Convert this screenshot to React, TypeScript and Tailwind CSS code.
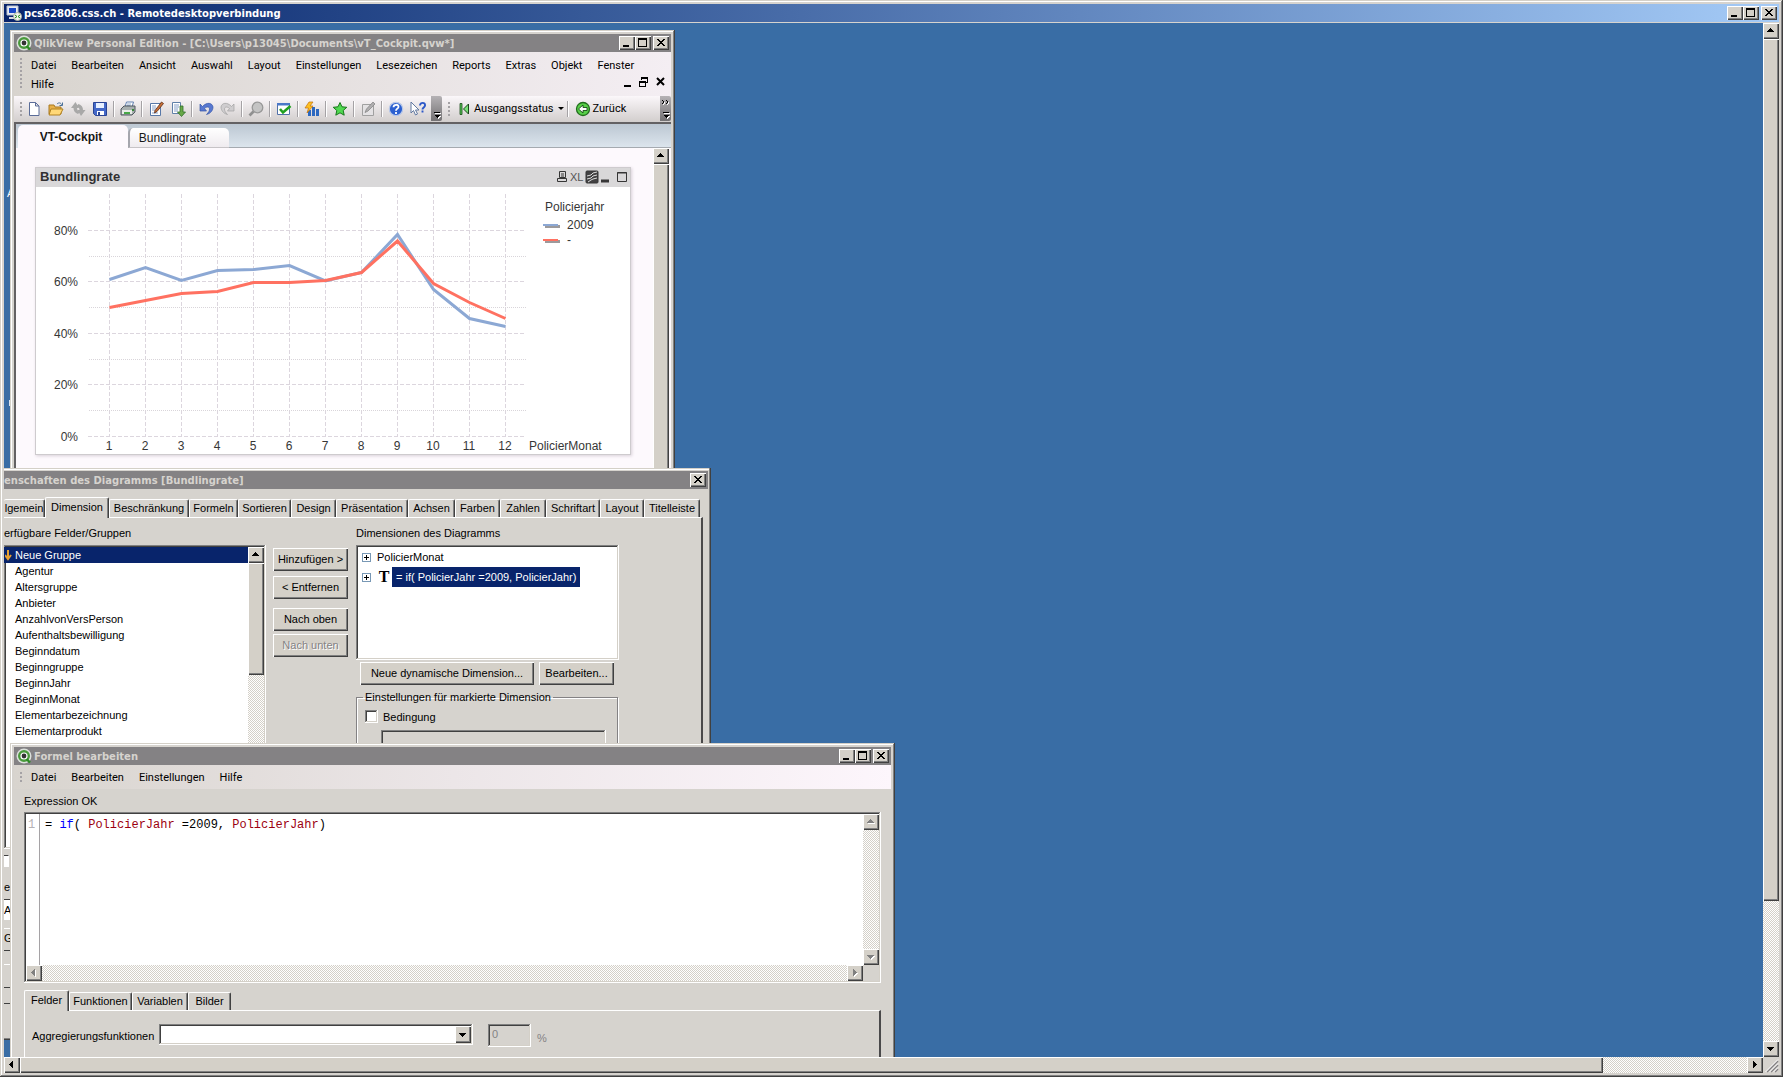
import type { ReactNode } from 'react'

const RAISED = 'bg-[#d4d0c8] shadow-[inset_1px_1px_0_#fff,inset_-1px_-1px_0_#404040,inset_-2px_-2px_0_#808080]'
const FRAME =
  'bg-[#d6d3ce] shadow-[inset_-1px_-1px_0_#404040,inset_1px_1px_0_#d4d0c8,inset_-2px_-2px_0_#808080,inset_2px_2px_0_#fff]'
const SUNKEN =
  'p-[2px] shadow-[inset_-1px_-1px_0_#fff,inset_1px_1px_0_#808080,inset_-2px_-2px_0_#d4d0c8,inset_2px_2px_0_#404040]'
const TRACK = '[background:repeating-conic-gradient(#d4d0c8_0_25%,#fff_0_50%)_0_0/2px_2px]'
const MENU_FONT = "font-['Roboto','Liberation_Sans',sans-serif] text-[11px] leading-4"
const CAPTION_FONT = "pt-px font-['DejaVu_Sans','Noto_Sans',sans-serif] text-[10px] font-bold leading-4"

/* ---------- window chrome ---------- */

function CaptionIcon({ kind }: { kind: 'min' | 'max' | 'close' }) {
  return (
    <svg width="16" height="14" viewBox="0 0 16 14" shapeRendering="crispEdges">
      {kind === 'min' && <rect x="4" y="9" width="6" height="2" fill="#000" />}
      {kind === 'max' && (
        <path d="M3 2h9v9H3zM4 4v6h7V4z" fill="#000" fillRule="evenodd" />
      )}
      {kind === 'close' && (
        <path d="M4 3h2v1h1v1h2V4h1V3h2v1h-1v1h-1v1H9v1h1v1h1v1h1v1h-2V9H9V8H7v1H6v1H4V9h1V8h1V7h1V6H6V5H5V4H4z" fill="#000" />
      )}
    </svg>
  )
}

function CaptionButtons({ only }: { only?: 'close' }) {
  return (
    <div className="ml-auto flex shrink-0 pr-[2px]">
      {!only && (
        <>
          <button aria-label="Minimieren" className={`h-[14px] w-4 ${RAISED}`}>
            <CaptionIcon kind="min" />
          </button>
          <button aria-label="Maximieren" className={`mr-[2px] h-[14px] w-4 ${RAISED}`}>
            <CaptionIcon kind="max" />
          </button>
        </>
      )}
      <button aria-label="Schliessen" className={`h-[14px] w-4 ${RAISED}`}>
        <CaptionIcon kind="close" />
      </button>
    </div>
  )
}

function QlikIcon() {
  return (
    <svg width="16" height="16" viewBox="0 0 16 16" className="ml-[2px] shrink-0">
      <circle cx="8" cy="8" r="7.5" fill="#dce0dc" />
      <circle cx="8" cy="8" r="4.800" fill="#fff" stroke="#4a9a3c" strokeWidth="2.400" />
      <circle cx="8" cy="8" r="2.400" fill="#333" />
      <path d="M10.500 11l3.500 3.500" stroke="#2c8a24" strokeWidth="2.400" />
    </svg>
  )
}

function InactiveTitle({ title, icon, only }: { title: string; icon?: boolean; only?: 'close' }) {
  return (
    <div className="flex h-[18px] shrink-0 items-center bg-[#848284]">
      {icon && <QlikIcon />}
      <h2 className={`whitespace-nowrap text-[#d6d3ce] ${icon ? 'pl-[2px]' : ''} ${CAPTION_FONT}`}>{title}</h2>
      <CaptionButtons only={only} />
    </div>
  )
}

/* ---------- scroll bars ---------- */

const ARROWS = {
  up: 'M4 9h7v-1h-1v-1H9V6H8V5H7v1H6v1H5v1H4z',
  down: 'M4 6h7v1h-1v1H9v1H8v1H7V9H6V8H5V7H4z',
  left: 'M9 4v7H8v-1H7V9H6V8H5V7h1V6h1V5h1V4z',
  right: 'M6 4v7h1v-1h1V9h1V8h1V7H9V6H8V5H7V4z',
}

function ArrowButton({ dir, disabled }: { dir: keyof typeof ARROWS; disabled?: boolean }) {
  return (
    <button aria-label={`Scroll ${dir}`} disabled={disabled} className={`size-4 shrink-0 ${RAISED}`}>
      <svg width="16" height="16" viewBox="0 0 16 16" shapeRendering="crispEdges">
        {disabled && <path d={ARROWS[dir]} fill="#fff" transform="translate(1 1)" />}
        <path d={ARROWS[dir]} fill={disabled ? '#808080' : '#000'} />
      </svg>
    </button>
  )
}

/* ---------- shared controls ---------- */

function Gripper({ dots }: { dots: number }) {
  return (
    <span className="flex flex-col gap-[2px]">
      {Array.from({ length: dots }, (_, i) => (
        <i key={i} className="size-[2px] bg-[#a5a2a5]" />
      ))}
    </span>
  )
}

function MenuItem({ children }: { children: ReactNode }) {
  return <button className={`h-[19px] px-[7px] text-black ${MENU_FONT}`}>{children}</button>
}

function PushButton({ children, className = '', disabled }: { children: ReactNode; className?: string; disabled?: boolean }) {
  return (
    <button
      disabled={disabled}
      className={`h-[23px] whitespace-nowrap pb-px text-center disabled:text-[#848284] disabled:[text-shadow:1px_1px_0_#fff] ${RAISED} ${className}`}
    >
      {children}
    </button>
  )
}

function TabButton({ label, width, active, cut }: { label: string; width: string; active?: boolean; cut?: boolean }) {
  return (
    <button
      role="tab"
      aria-selected={!!active}
      className={`shrink-0 whitespace-nowrap border-t border-white border-r-[#404040] text-center shadow-[inset_-1px_0_0_#808080] ${width} ${
        active ? 'z-10 -mb-px h-[21px] rounded-t-[2px] border-x bg-[#d6d3ce] pb-[2px]' : 'h-[18px] rounded-t-[2px] border-r'
      } ${cut || active ? '' : 'border-l'}`}
    >
      {label}
    </button>
  )
}

/* ---------- toolbar icons, all on a 16px grid ---------- */

const icons: Record<string, ReactNode> = {
  new: <path d="M3.500 1.500h6l3.500 3.500v9.500h-9.500zM9.500 1.500v3.500h3.500" fill="#fff" stroke="#5a6c98" />,
  open: (
    <>
      <path d="M1 13V4h5l1 2h6v7z" fill="#e8b048" stroke="#a87820" />
      <path d="M3 8h12l-3 6H1z" fill="#ffd878" stroke="#b08020" />
      <path d="M9 3c2-2 4-1 5 1M14.500 1.500V4.500H11.500" fill="none" stroke="#4a7098" />
    </>
  ),
  reload: (
    <>
      <path d="M1 7l4.500-6L9 7H7c0 2 1 3 3 4l-2 2C5 12 3.500 10 3.500 7z" fill="#a8a8a8" />
      <path d="M15.500 9L11 15 7.500 9h2c0-2-1-3-3-4l2-2c3 1 4.500 3 4.500 6z" fill="#a8a8a8" />
    </>
  ),
  save: (
    <>
      <path d="M1.500 1.500h13v13h-11l-2-2z" fill="#4468c8" stroke="#2a4494" />
      <path d="M4 2h8v5H4z" fill="#e8f0ff" />
      <path d="M5 10h7v4H5z" fill="#fff" />
      <path d="M6 11h2v3H6z" fill="#2a4494" />
    </>
  ),
  print: (
    <>
      <path d="M5 6l1.500-5h7L12 6z" fill="#fff" stroke="#6080b0" />
      <path d="M7 3h4M6.500 4.500h4" stroke="#7898c0" strokeWidth=".8" />
      <path d="M1 8l3-3h11v6l-3 3H1z" fill="#a8b0b0" stroke="#505860" />
      <path d="M2 9h10v4H2z" fill="#e8ece8" />
      <path d="M4 11h6v2H4z" fill="#48a848" />
      <path d="M12 8h2v2h-2z" fill="#388838" />
    </>
  ),
  edit: (
    <>
      <path d="M2.500 2.500h10v12h-10z" fill="#fff" stroke="#5878a8" />
      <path d="M4 5h4M4 7h4M4 9h3M4 12h6" stroke="#88a0c8" />
      <path d="M13.500 1l2 1.500-6.500 8-2.500 1.500.5-2.500z" fill="#c87038" stroke="#5a2c18" strokeWidth=".8" />
    </>
  ),
  script: (
    <>
      <path d="M2.500 1.500h8v11h-8z" fill="#fff" stroke="#6080a8" />
      <path d="M4 4h5M4 6h5M4 8h4M4 10h4" stroke="#88a0c8" />
      <path d="M10 5h3v6h2.500l-4 4.500-4-4.500H10z" fill="#68a848" stroke="#30702c" strokeWidth=".8" />
    </>
  ),
  undo: (
    <path
      d="M2 3v7h6.500L6.500 7.500c2-2 5-2 5 .5 0 2-1 3.500-3 5.500 4-1 6.500-4 6.500-7.500C14.500 2 9 .5 4.500 5.500z"
      fill="#5878d0"
      stroke="#3454a8"
      strokeWidth=".7"
    />
  ),
  redo: (
    <path
      d="M14 3v7H7.500L9.500 7.500c-2-2-5-2-5 .5 0 2 1 3.500 3 5.500C3.500 12.500 1 9.500 1 6 1.500 2 7 .5 11.500 5.500z"
      fill="#cfcdcf"
      stroke="#a0a0a0"
      strokeWidth=".7"
    />
  ),
  find: (
    <>
      <circle cx="9.500" cy="6.500" r="5.300" fill="#c4c4c4" stroke="#989898" strokeWidth="1.300" />
      <path d="M5.500 10.500L1.500 14.500" stroke="#909090" strokeWidth="2.600" />
    </>
  ),
  check: (
    <>
      <path d="M1.500 2.500h12v11h-12z" fill="#fff" stroke="#5070a8" />
      <path d="M1 2h13v2.500H1z" fill="#4a78c8" />
      <path d="M4 8l3 3.500L14.500 5" fill="none" stroke="#20a020" strokeWidth="2.600" />
    </>
  ),
  chart: (
    <>
      <path d="M5.500 9v6M9.500 6v9M13.500 8v7" stroke="#2c68c0" strokeWidth="3" />
      <path d="M5 1h4L6 5h3l-6 7 1.500-5H1z" fill="#ffc020" stroke="#c07010" strokeWidth=".7" />
    </>
  ),
  star: <path d="M8 1.500l2 4.300 4.800.5-3.600 3.200 1 4.700L8 11.800 3.800 14.200l1-4.700L1.200 6.300 6 5.800z" fill="#50d850" stroke="#18781c" />,
  note: (
    <>
      <path d="M2.500 3.500h11v11h-11z" fill="#e4e2e4" stroke="#a0a0a0" />
      <path d="M13 1l2 2-7 7-3 1.500L6.500 8z" fill="#b0aeb0" stroke="#888" strokeWidth=".8" />
    </>
  ),
  help: (
    <>
      <circle cx="8" cy="8" r="6.700" fill="#2c60d0" stroke="#b8c8e8" strokeWidth="1.200" />
      <path d="M5.500 6.200C5.500 3 10.800 3 10.500 6 10.300 7.700 8 7.700 8 9.700M8 11v2" fill="none" stroke="#fff" strokeWidth="1.800" />
    </>
  ),
  whats: (
    <>
      <path d="M1 1v11l2.500-2.500L5.500 14l2-1-2-4H9z" fill="#fff" stroke="#6078a0" />
      <path d="M10 4.500C10 1 15.500 1 15 4.500c-.3 2-2.500 2-2.500 4M12.500 9.500v2" fill="none" stroke="#2c58c8" strokeWidth="1.900" />
    </>
  ),
  start: (
    <>
      <path d="M4 2.500h2v11H4z" fill="#58c858" stroke="#184818" strokeWidth=".8" />
      <path d="M12.500 3v10L7.500 8z" fill="#78e078" stroke="#184818" />
    </>
  ),
  back: (
    <>
      <circle cx="8" cy="8" r="6.500" fill="#58d048" stroke="#206c1c" strokeWidth="1.300" />
      <path d="M3.500 8L8 4v2.500h4v3H8V12z" fill="#fff" stroke="#184c18" strokeWidth=".9" />
    </>
  ),
}

function Icon({ name }: { name: string }) {
  return (
    <svg width="16" height="16" viewBox="0 0 16 16" className="shrink-0">
      {icons[name]}
    </svg>
  )
}

const toolbar = [
  ['new', 'open', 'reload', 'save'],
  ['print'],
  ['edit', 'script'],
  ['undo', 'redo'],
  ['find'],
  ['check'],
  ['chart'],
  ['star'],
  ['note'],
  ['help', 'whats'],
]

function Separator() {
  return <span className="mx-[2px] h-4 w-[2px] border-l border-[#a5a2a5] bg-white" />
}

function Overflow({ double }: { double?: boolean }) {
  return (
    <button
      aria-label="Weitere Schaltflächen"
      className="h-[25px] w-[11px] shrink-0 rounded-r-[2px] bg-linear-to-b from-[#b5b2b5] to-[#737173]"
    >
      <svg width="11" height="25" viewBox="0 0 11 25" shapeRendering="crispEdges">
        {double && (
          <>
            <path d="M3 5l2 2-2 2M7 5l2 2-2 2" stroke="#fff" fill="none" />
            <path d="M2 4l2 2-2 2M6 4l2 2-2 2" stroke="#000" fill="none" />
          </>
        )}
        <path d="M4 17h6v1H4zM5 20h5l-2.500 3z" fill="#fff" />
        <path d="M3 16h6v1H3zM3 19h6l-3 3z" fill="#000" />
      </svg>
    </button>
  )
}

/* ---------- line chart ---------- */

const series2009 = [279.5, 267.5, 280.5, 270.5, 269.5, 265.5, 281, 272.5, 234.5, 289.5, 318.5, 326.5]
const seriesOther = [307.5, 300.5, 293.5, 291.5, 282.5, 282.5, 280.5, 272.5, 241, 283.5, 302.5, 318.5]
const toPoints = (values: number[]) => values.map((y, i) => `${109.5 + i * 36},${y}`).join(' ')

const yAxis: [string, number][] = [
  ['80%', 230.5],
  ['60%', 281.5],
  ['40%', 333.5],
  ['20%', 384.5],
  ['0%', 436.5],
]

function LineChart() {
  return (
    <svg width="594" height="267" viewBox="36 187 594 267" className="block font-['Liberation_Sans',Arial,sans-serif] text-[12px]">
      <g stroke="#dcd6de" strokeDasharray="4 2" shapeRendering="crispEdges">
        {yAxis.map(([label, y]) => (
          <path key={label} d={`M88 ${y}H526`} />
        ))}
        {series2009.map((_, i) => (
          <path key={i} d={`M${109.5 + i * 36} 194V437`} />
        ))}
      </g>
      <g stroke="#d9d5da" strokeDasharray="1 1" shapeRendering="crispEdges">
        {[256.5, 307.5, 359.5, 410.5].map((y) => (
          <path key={y} d={`M89 ${y}H526`} />
        ))}
      </g>
      <polyline points={toPoints(series2009)} fill="none" stroke="#8ca8d4" strokeWidth="3" />
      <polyline points={toPoints(seriesOther)} fill="none" stroke="#ff7161" strokeWidth="3" />
      <g fill="#363636">
        {yAxis.map(([label, y]) => (
          <text key={label} x="78" y={y + 4} textAnchor="end">
            {label}
          </text>
        ))}
        {series2009.map((_, i) => (
          <text key={i} x={109 + i * 36} y="450" textAnchor="middle">
            {i + 1}
          </text>
        ))}
        <text x="529" y="450">PolicierMonat</text>
        <text x="545" y="211">Policierjahr</text>
        <text x="567" y="229">2009</text>
        <text x="567" y="244">-</text>
      </g>
      <path d="M545 226.500h15M545 241.500h15" stroke="#9c9a9c" strokeWidth="3" />
      <path d="M543 225h15" stroke="#8ca8d4" strokeWidth="2" />
      <path d="M543 240h15" stroke="#ff7161" strokeWidth="2" />
    </svg>
  )
}

function ChartObject() {
  return (
    <section className="w-[596px] border border-[#cecbce] bg-white shadow-[1px_1px_3px_#d8d0d8]">
      <header className="flex h-[19px] items-center bg-[#d9d8d9] pb-px pl-1 pr-[2px]">
        <h3 className="text-[13px] font-bold leading-4 text-[#313031]">Bundlingrate</h3>
        <svg width="72" height="14" viewBox="0 0 72 14" className="ml-auto" fill="none" stroke="#363636">
          <path d="M3.500 1.500h6v6h-6zM5 4h3M5 6h3M1.500 8.500h9v3h-9z" />
          <rect x="30" y="1" width="12" height="12" rx="1" fill="#424142" />
          <path d="M31 6l4-1 2-2 4-1M31 9l4-1 2-2 4-1M32 12l3-2 2-1 4-1" stroke="#ddd" />
          <path d="M45 11h8" strokeWidth="3" />
          <path d="M61.500 2.500h9v9h-9zM61 3h10" />
          <text x="14" y="11" fill="#555" stroke="none" fontSize="11">
            XL
          </text>
        </svg>
      </header>
      <LineChart />
    </section>
  )
}

/* ---------- windows ---------- */

const mainMenu = ['Datei', 'Bearbeiten', 'Ansicht', 'Auswahl', 'Layout', 'Einstellungen', 'Lesezeichen', 'Reports', 'Extras', 'Objekt', 'Fenster']

function QlikViewWindow() {
  return (
    <section className={`absolute left-[6px] top-[7px] flex h-[620px] w-[665px] flex-col p-1 ${FRAME}`}>
      <InactiveTitle title="QlikView Personal Edition - [C:\Users\p13045\Documents\vT_Cockpit.qvw*]" icon />
      <nav className="flex h-11 shrink-0 bg-linear-to-r from-[#d8d4ce] to-[#f4eef3] pl-[6px] pr-[6px] pt-1">
        <div className="pt-[2px]">
          <Gripper dots={8} />
        </div>
        <div className="min-w-0 flex-1 pl-[2px]">
          <div className="flex gap-px">
            {mainMenu.map((item) => (
              <MenuItem key={item}>{item}</MenuItem>
            ))}
          </div>
          <div className="flex items-start justify-between">
            <MenuItem>Hilfe</MenuItem>
            <div className="flex gap-2 pt-[2px]">
              <button aria-label="Dokument minimieren">
                <svg width="8" height="10" viewBox="0 0 8 10">
                  <path d="M1 8h7v2H1z" />
                </svg>
              </button>
              <button aria-label="Dokument wiederherstellen">
                <svg width="9" height="10" viewBox="0 0 9 10" fill="none" stroke="#000" shapeRendering="crispEdges">
                  <path d="M2.500 3V.500h6v5H6.500M2 1.500h7M.500 4.500h6v5h-6zM0 5.500h7" />
                </svg>
              </button>
              <button aria-label="Dokument schliessen">
                <svg width="9" height="10" viewBox="0 0 9 10" stroke="#000" strokeWidth="2">
                  <path d="M1 1l7 7M8 1L1 8" />
                </svg>
              </button>
            </div>
          </div>
        </div>
      </nav>
      <div className="flex h-[26px] shrink-0 items-center bg-linear-to-b from-[#fbf7fa] to-[#d2cecd] pb-px pl-[6px]">
        <Gripper dots={4} />
        <div className="flex items-center pl-px">
          {toolbar.map((group, g) => (
            <div key={g} className="flex items-center">
              {g > 0 && <Separator />}
              {group.map((name) => (
                <button key={name} aria-label={name} className="flex w-[22px] justify-center">
                  <Icon name={name} />
                </button>
              ))}
            </div>
          ))}
        </div>
        <div className="flex flex-1 items-center pl-[2px]">
          <Overflow />
          <span className="px-[6px]">
            <Gripper dots={4} />
          </span>
          <button className={`flex items-center gap-[2px] ${MENU_FONT}`}>
            <Icon name="start" />
            Ausgangsstatus
            <svg width="9" height="4" viewBox="0 0 9 4">
              <path d="M2 0h6L5 3z" />
            </svg>
          </button>
          <Separator />
          <button className={`flex items-center gap-[2px] pl-1 ${MENU_FONT}`}>
            <Icon name="back" />
            Zurück
          </button>
          <span className="ml-auto flex">
            <Overflow double />
          </span>
        </div>
      </div>
      <div className="flex min-h-0 flex-1 flex-col border-l-2 border-t-2 border-[#636163]">
        <div role="tablist" className="flex h-6 shrink-0 items-end bg-linear-to-b from-[#bcc7d2] to-[#dde6ee] pl-[2px]">
          <button role="tab" aria-selected className="h-[23px] w-[110px] rounded-t-[5px] bg-[#fdf9fd] pr-1 text-[12px] font-bold text-[#181818]">
            VT-Cockpit
          </button>
          <button
            role="tab"
            aria-selected={false}
            className="h-5 w-[101px] rounded-t-[5px] border-b border-l-2 border-b-[#c6c3c6] border-l-[#a5a6ad] bg-linear-to-b from-white to-[#efebef] pr-[14px] text-[12px] text-[#181818]"
          >
            Bundlingrate
          </button>
          <span className="h-px flex-1 bg-[#a5aab0]" />
        </div>
        <div className="flex min-h-0 flex-1 bg-[#fdf9fd]">
          <div className="flex-1 pl-[19px] pt-[19px]">
            <ChartObject />
          </div>
          <div className="mr-[2px] flex w-4 flex-col">
            <ArrowButton dir="up" />
            <div className={`flex-1 ${RAISED}`} />
          </div>
        </div>
      </div>
    </section>
  )
}

const propertyTabs: [string, string][] = [
  ['Beschränkung', 'w-20'],
  ['Formeln', 'w-[49px]'],
  ['Sortieren', 'w-[53px]'],
  ['Design', 'w-[45px]'],
  ['Präsentation', 'w-[72px]'],
  ['Achsen', 'w-[47px]'],
  ['Farben', 'w-[45px]'],
  ['Zahlen', 'w-[46px]'],
  ['Schriftart', 'w-[54px]'],
  ['Layout', 'w-11'],
  ['Titelleiste', 'w-14'],
]

const fields = [
  'Agentur',
  'Altersgruppe',
  'Anbieter',
  'AnzahlvonVersPerson',
  'Aufenthaltsbewilligung',
  'Beginndatum',
  'Beginngruppe',
  'BeginnJahr',
  'BeginnMonat',
  'Elementarbezeichnung',
  'Elementarprodukt',
  'Entität',
]

function Expander() {
  return (
    <button aria-label="Erweitern" className="shrink-0">
      <svg width="9" height="9" viewBox="0 0 9 9" shapeRendering="crispEdges">
        <rect x=".5" y=".5" width="8" height="8" fill="#fff" stroke="#7898b5" />
        <path d="M2 4h5v1H2zM4 2h1v5H4z" fill="#000" />
      </svg>
    </button>
  )
}

function PropertiesDialog() {
  return (
    <section className="absolute left-0 top-[445px] h-[572px] w-[707px] bg-[#d6d3ce] pr-[3px] pt-[3px] shadow-[inset_-1px_-1px_0_#404040,inset_-2px_-2px_0_#808080,inset_0_1px_0_#d4d0c8,inset_0_2px_0_#fff]">
      <InactiveTitle title="enschaften des Diagramms [Bundlingrate]" only="close" />
      <div role="tablist" className="flex h-7 items-end">
        <TabButton label="lgemein" width="w-[41px]" cut />
        <TabButton label="Dimension" width="w-16" active />
        {propertyTabs.map(([label, width]) => (
          <TabButton key={label} label={label} width={width} />
        ))}
      </div>
      <div className="mr-[5px] h-[510px] border-r-2 border-t border-t-white border-r-[#4a494a]">
        <div className="flex">
          <div className="w-[262px]">
            <h3 className="flex h-[27px] items-center pt-[3px] leading-4">erfügbare Felder/Gruppen</h3>
            <div className={`flex h-[304px] bg-white ${SUNKEN} pl-0`}>
              <ul role="listbox" aria-label="Felder" className="flex-1 overflow-hidden leading-4">
                <li role="option" aria-selected className="flex bg-[#08246b] pl-px text-white">
                  <svg width="7" height="16" viewBox="0 0 7 16">
                    <path d="M3 3v8M0 8l3 4 3-4" fill="none" stroke="#e8a030" strokeWidth="2" />
                  </svg>
                  <span className="pl-[3px]">Neue Gruppe</span>
                </li>
                {fields.map((field) => (
                  <li key={field} role="option" aria-selected={false} className="pl-[11px]">
                    {field}
                  </li>
                ))}
              </ul>
              <div className={`flex w-4 flex-col ${TRACK}`}>
                <ArrowButton dir="up" />
                <div className={`h-28 ${RAISED}`} />
                <div className="flex-1" />
                <ArrowButton dir="down" />
              </div>
            </div>
            <div className="mt-[6px] h-3 w-[5px] border-r border-t border-r-white border-t-[#404040] bg-white" />
            <p className="mt-3 w-[6px] overflow-hidden whitespace-nowrap leading-4">el</p>
            <p className="mt-1 w-[6px] overflow-hidden whitespace-nowrap border-t border-[#404040] bg-white py-[2px] leading-4">A</p>
            <p className="mt-2 h-[23px] w-[6px] overflow-hidden whitespace-nowrap border-b border-t border-b-[#404040] border-t-white pt-px leading-4">G</p>
            <div className="mt-[13px] h-6 w-[6px] border-b border-t border-b-[#404040] border-t-white" />
            <div className="h-4 w-[6px] border-b border-[#404040]" />
          </div>
          <div className="ml-[7px] flex w-[75px] flex-col pt-[30px]">
            <PushButton>Hinzufügen &gt;</PushButton>
            <PushButton className="mt-[5px]">&lt; Entfernen</PushButton>
            <PushButton className="mt-[9px]">Nach oben</PushButton>
            <PushButton className="mt-[3px]" disabled>
              Nach unten
            </PushButton>
          </div>
          <div className="ml-2 w-[263px]">
            <h3 className="flex h-[27px] items-center pt-[3px] leading-4">Dimensionen des Diagramms</h3>
            <ul role="tree" className={`h-[115px] bg-white ${SUNKEN}`}>
              <li role="treeitem" className="flex h-5 items-center gap-[6px] pl-1">
                <Expander />
                PolicierMonat
              </li>
              <li role="treeitem" aria-selected className="flex h-5 items-center pl-1">
                <Expander />
                <b className="w-[21px] pl-[5px] text-center font-['Liberation_Serif',serif] text-[16px] leading-4">T</b>
                <span className="h-5 w-[188px] whitespace-nowrap bg-[#08246b] pl-1 leading-5 text-white">= if( PolicierJahr =2009, PolicierJahr)</span>
              </li>
            </ul>
            <div className="flex gap-[5px] pl-1 pt-[2px]">
              <PushButton className="w-[174px]">Neue dynamische Dimension...</PushButton>
              <PushButton className="w-[75px]">Bearbeiten...</PushButton>
            </div>
            <fieldset className="mr-px mt-1 h-[250px] border border-[#848284] pl-2 shadow-[1px_1px_0_#fff,inset_1px_1px_0_#fff]">
              <legend className="-ml-[2px] px-[2px] leading-4">Einstellungen für markierte Dimension</legend>
              <div className="mt-[5px] flex h-[13px] items-center gap-[5px]">
                <input id="bedingung" type="checkbox" className={`size-[13px] appearance-none bg-white ${SUNKEN}`} />
                <label htmlFor="bedingung" className="leading-4">
                  Bedingung
                </label>
              </div>
              <input aria-label="Bedingung Formel" className={`ml-4 mt-[7px] block h-6 w-[225px] bg-[#d6d3ce] ${SUNKEN}`} />
            </fieldset>
          </div>
        </div>
      </div>
    </section>
  )
}

function FormulaDialog() {
  return (
    <section className={`absolute left-[6px] top-[720px] flex h-[520px] w-[885px] flex-col p-1 ${FRAME}`}>
      <InactiveTitle title="Formel bearbeiten" icon />
      <nav className="flex h-6 shrink-0 items-center bg-linear-to-r from-[#d8d4ce] via-[#ece6e8] to-[#fdf6fc] pl-[6px]">
        <Gripper dots={3} />
        <div className="flex gap-px pl-[2px] pt-[2px]">
          {['Datei', 'Bearbeiten', 'Einstellungen', 'Hilfe'].map((item) => (
            <MenuItem key={item}>{item}</MenuItem>
          ))}
        </div>
      </nav>
      <div className="flex flex-col px-[10px]">
        <p className="flex h-[23px] items-center leading-4">Expression OK</p>
        <div className={`flex h-[171px] flex-col bg-white ${SUNKEN}`}>
          <div className="flex flex-1">
            <div className="flex flex-1 font-['Liberation_Mono','Courier_New',monospace] text-[12px] leading-4">
              <span className="w-[14px] border-r border-[#a5a2a5] pl-[2px] pt-[3px] text-[#b5b2b5]">1</span>
              <div
                role="textbox"
                aria-label="Formel"
                contentEditable
                suppressContentEditableWarning
                className="flex-1 whitespace-pre pl-[5px] pt-[3px] text-black"
              >
                = <span className="text-[#0000ff]">if</span>( <span className="text-[#9c0010]">PolicierJahr</span> =2009,{' '}
                <span className="text-[#9c0010]">PolicierJahr</span>)
              </div>
            </div>
            <div className={`flex w-4 flex-col justify-between ${TRACK}`}>
              <ArrowButton dir="up" disabled />
              <ArrowButton dir="down" disabled />
            </div>
          </div>
          <div className="flex bg-[#d6d3ce] pr-4">
            <div className={`flex flex-1 justify-between ${TRACK}`}>
              <ArrowButton dir="left" disabled />
              <ArrowButton dir="right" disabled />
            </div>
          </div>
        </div>
        <div role="tablist" className="flex h-[27px] items-end">
          <TabButton label="Felder" width="w-[45px]" active />
          <TabButton label="Funktionen" width="w-[63px]" />
          <TabButton label="Variablen" width="w-14" />
          <TabButton label="Bilder" width="w-[43px]" />
        </div>
        <div className="flex h-24 items-start border-l border-r-2 border-t border-white border-r-[#4a494a] pl-[7px] pt-[13px]">
          <label htmlFor="aggregation" className="w-[127px] pt-1 leading-4">
            Aggregierungsfunktionen
          </label>
          <div className={`relative h-[21px] w-[314px] bg-white ${SUNKEN}`}>
            <select id="aggregation" className="h-full w-full appearance-none bg-white pl-1 outline-none">
              <option></option>
            </select>
            <span className={`pointer-events-none absolute right-[2px] top-[2px] flex h-[17px] w-4 items-center ${RAISED}`}>
              <svg width="16" height="16" viewBox="0 0 16 16" shapeRendering="crispEdges">
                <path d={ARROWS.down} />
              </svg>
            </span>
          </div>
          <input
            id="percent"
            disabled
            defaultValue="0"
            className={`ml-[15px] h-[23px] w-[43px] bg-[#d6d3ce] text-[#848284] ${SUNKEN} pb-[6px] pl-1`}
          />
          <label htmlFor="percent" className="pl-[6px] pt-[6px] leading-4 text-[#848284]">
            %
          </label>
        </div>
      </div>
    </section>
  )
}

/* ---------- remote desktop session ---------- */

export default function App() {
  return (
    <main className={`flex h-screen min-h-0 flex-col overflow-hidden p-1 font-['Liberation_Sans',Arial,sans-serif] text-[11px] text-black ${FRAME}`}>
      <header className="mb-px flex h-[18px] shrink-0 items-center bg-linear-to-r from-[#08246b] to-[#a5cbf7]">
        <svg width="16" height="16" viewBox="0 0 16 16" className="ml-[2px] shrink-0">
          <path d="M1 1h11v9H1z" fill="#e8ecf4" stroke="#b8c0d0" />
          <path d="M3 3h7v5H3z" fill="#1848c8" />
          <path d="M3 12h7v2H3z" fill="#d8d8e0" />
          <circle cx="11.500" cy="11.500" r="4" fill="#f4f4ec" stroke="#a8b0a0" />
          <path d="M9 10l2 1.500L9 13M14 10l-2 1.500 2 1.500" fill="none" stroke="#189018" />
        </svg>
        <h1 className={`whitespace-nowrap pl-[2px] text-white ${CAPTION_FONT}`}>pcs62806.css.ch - Remotedesktopverbindung</h1>
        <CaptionButtons />
      </header>
      <div className="flex min-h-0 flex-1">
        <div className="relative flex-1 overflow-hidden bg-[#396da5]">
          <span className="absolute left-[3px] top-[162px] leading-4 text-white">A</span>
          <span className="absolute left-[5px] top-[377px] h-[6px] w-[2px] bg-[#d8e4f0]" />
          <QlikViewWindow />
          <PropertiesDialog />
          <FormulaDialog />
        </div>
        <div className={`flex w-4 flex-col ${TRACK}`}>
          <ArrowButton dir="up" />
          <div className="min-h-0 flex-1">
            <div className={`h-[86%] ${RAISED}`} />
          </div>
          <ArrowButton dir="down" />
        </div>
      </div>
      <footer className="flex h-4 shrink-0">
        <div className={`flex flex-1 ${TRACK}`}>
          <ArrowButton dir="left" />
          <div className="flex flex-1">
            <div className={`w-11/12 ${RAISED}`} />
          </div>
          <ArrowButton dir="right" />
        </div>
        <svg width="16" height="16" viewBox="0 0 16 16" strokeWidth="1.500">
          <path d="M4 15L15 4M8 15l7-7M12 15l3-3" stroke="#848284" />
          <path d="M2.500 15L15 2.500M6.500 15L15 6.500M10.500 15l4.500-4.500" stroke="#fff" strokeWidth="1" />
        </svg>
      </footer>
    </main>
  )
}
